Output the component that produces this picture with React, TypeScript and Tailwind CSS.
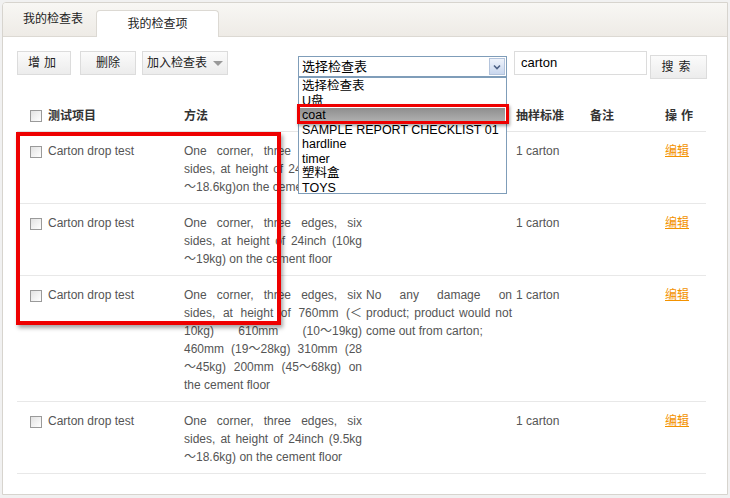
import React from 'react';

const font = { fontFamily: '"Liberation Sans", Arial, "Noto Sans CJK SC", sans-serif' };

type Row = { name: string; method: string; judge?: string; sample: string };

const rows: Row[] = [
  {
    name: 'Carton drop test',
    method: 'One corner, three edges, six sides, at height of 24inch (9.5kg～18.6kg)on the cement floor',
    sample: '1 carton',
  },
  {
    name: 'Carton drop test',
    method: 'One corner, three edges, six sides, at height of 24inch (10kg～19kg) on the cement floor',
    sample: '1 carton',
  },
  {
    name: 'Carton drop test',
    method:
      'One corner, three edges, six sides, at height of 760mm (＜10kg) 610mm (10～19kg) 460mm (19～28kg) 310mm (28～45kg) 200mm (45～68kg) on the cement floor',
    judge: 'No any damage on product; product would not come out from carton;',
    sample: '1 carton',
  },
  {
    name: 'Carton drop test',
    method: 'One corner, three edges, six sides, at height of 24inch (9.5kg～18.6kg) on the cement floor',
    sample: '1 carton',
  },
];

const options = ['选择检查表', 'U盘', 'coat', 'SAMPLE REPORT CHECKLIST 01', 'hardline', 'timer', '塑料盒', 'TOYS'];

// keep the full-width tilde out of justification spacing
function Tilde({ text }: { text: string }) {
  const parts = text.split('～');
  return (
    <>
      {parts.map((p, i) => (
        <React.Fragment key={i}>
          {i > 0 && <span className="inline-block leading-none">～</span>}
          {p}
        </React.Fragment>
      ))}
    </>
  );
}

function Box() {
  return (
    <span className="inline-block h-[12px] w-[12px] shrink-0 border border-[#9a9a9a] bg-gradient-to-br from-[#e2e2e2] to-white" />
  );
}

function Btn({ children, className = '' }: { children: React.ReactNode; className?: string }) {
  return (
    <div
      className={`flex h-[24px] items-center justify-center border border-[#dcdcdc] bg-gradient-to-b from-[#fbfbfb] to-[#ececec] text-[12px] text-[#222] ${className}`}
    >
      {children}
    </div>
  );
}

export default function App() {
  return (
    <div className="h-[498px] w-[730px] overflow-hidden bg-[#f1f1f1] pt-[2px] pl-[2px]" style={font}>
      <div className="h-[493px] w-[726px] overflow-hidden rounded-tl-[4px] border border-[#d7d4ce] bg-white">
        {/* tab bar */}
        <div className="flex h-[34px] items-end border-b border-[#dcd9d3] bg-gradient-to-b from-[#f8f7f4] to-[#eeebe6] pl-[20px]">
          <div className="mb-[8px] text-[12px] text-[#222]">我的检查表</div>
          <div className="-mb-px ml-[13px] flex h-[27px] w-[123px] items-center justify-center rounded-t-[4px] border border-b-0 border-[#dcd9d3] bg-white text-[12px] text-[#222]">
            我的检查项
          </div>
        </div>

        <div className="px-[14px] pt-[14px]">
          {/* toolbar */}
          <div className="flex h-[29px] items-start">
            <Btn className="w-[54px] tracking-[4px]">增加</Btn>
            <Btn className="ml-[9px] w-[56px]">删除</Btn>
            <Btn className="ml-[6px] w-[86px] gap-[6px]">
              <span>加入检查表</span>
              <span className="h-0 w-0 border-x-[5px] border-t-[5px] border-x-transparent border-t-[#999]" />
            </Btn>

            <div className="relative ml-[70px] mt-[5px] h-[21px] w-[209px] border border-[#7f9db9] bg-white">
              <div className="pl-[3px] text-[13px] leading-[19px] text-black">选择检查表</div>
              <div className="absolute right-[1px] top-[1px] flex h-[17px] w-[16px] items-center justify-center border border-[#b4c4dc] bg-gradient-to-b from-[#eef3fb] to-[#c9d7ee]">
                <svg width="8" height="6" viewBox="0 0 8 6">
                  <path d="M1 1.5 L4 4.5 L7 1.5" stroke="#4d6185" strokeWidth="1.6" fill="none" />
                </svg>
              </div>
              {/* open dropdown list */}
              <div className="absolute left-[-1px] top-[20px] z-10 h-[117px] w-[209px] border border-[#7f9db9] bg-white pt-px">
                {options.map((o, i) => (
                  <div
                    key={o}
                    className={`mx-px h-[14.5px] whitespace-nowrap pl-[2px] text-[12.5px] leading-[14.5px] text-black ${
                      i === 2 ? 'bg-gradient-to-b from-[#8e8e8e] to-[#b4b4b4]' : ''
                    }`}
                  >
                    {o}
                  </div>
                ))}
                <div className="absolute left-[-2px] top-[26px] h-[20px] w-[212px] border-[3px] border-[#ee0000] shadow-[1px_2px_3px_rgba(0,0,0,0.35)]" />
              </div>
            </div>

            <div className="ml-[7px] flex h-[24px] w-[133px] items-center border border-[#dcdcdc] pl-[6px] text-[13px] text-black">
              carton
            </div>
            <Btn className="ml-[3px] mt-[4px] w-[57px] tracking-[5px]">搜索</Btn>
          </div>

          {/* table */}
          <div className="relative mt-[20px] w-[689px] text-[12px] text-[#555]">
            <div className="grid h-[32px] grid-cols-[167px_182px_150px_74px_75px_1fr] items-center border-b border-[#e6e6e6] font-bold text-[#333]">
              <div className="flex items-center gap-[6px] pl-[13px]">
                <Box />
                <span>测试项目</span>
              </div>
              <div>方法</div>
              <div>判定标准</div>
              <div>抽样标准</div>
              <div>备注</div>
              <div className="tracking-[4px]">操作</div>
            </div>

            {rows.map((r, i) => (
              <div
                key={i}
                className="grid grid-cols-[167px_182px_150px_74px_75px_1fr] border-b border-[#e8e8e8] pb-[7px] pt-[10px] leading-[18px]"
              >
                <div className="flex items-start gap-[6px] pl-[13px]">
                  <span className="mt-[3px]">
                    <Box />
                  </span>
                  <span>{r.name}</span>
                </div>
                <div className="pr-[4px] text-justify">
                  <Tilde text={r.method} />
                </div>
                <div className="pr-[4px] text-justify">{r.judge ?? ''}</div>
                <div>{r.sample}</div>
                <div />
                <div>
                  <span className="text-[#f39200] underline">编辑</span>
                </div>
              </div>
            ))}

            {/* highlight frame */}
            <div className="absolute left-[-1px] top-[32px] h-[193px] w-[265px] border-[4px] border-[#ee0000] shadow-[2px_3px_4px_rgba(0,0,0,0.35)]" />
          </div>
        </div>
      </div>
    </div>
  );
}
